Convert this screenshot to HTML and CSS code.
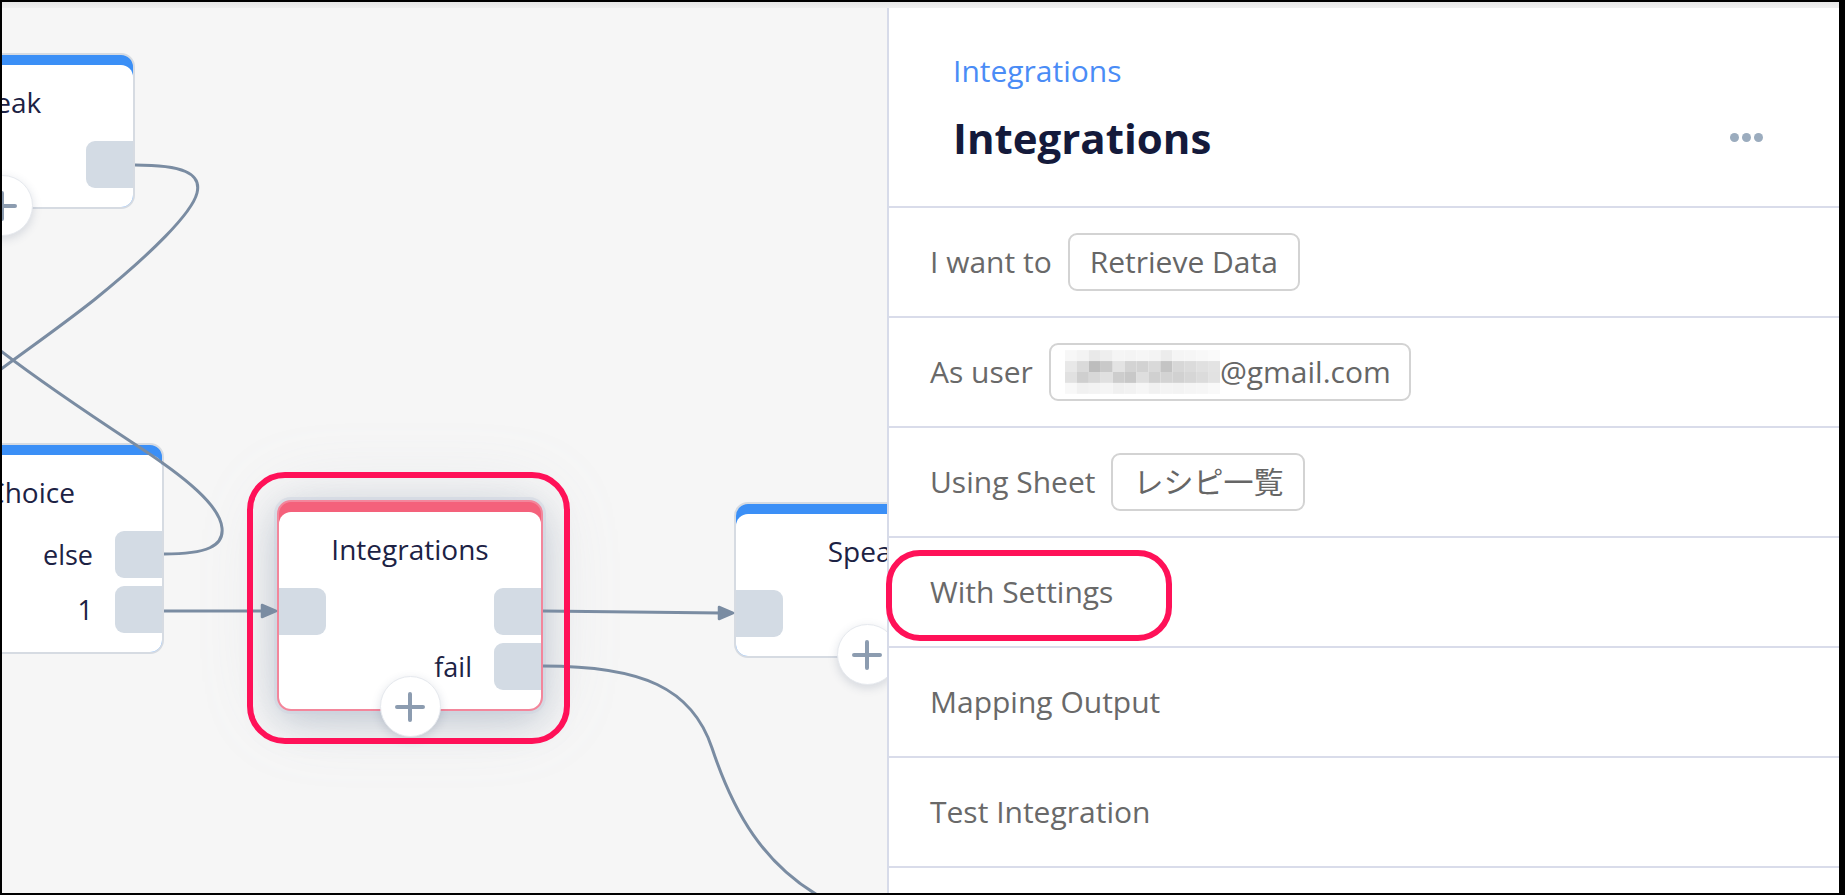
FILE: index.html
```html
<!DOCTYPE html>
<html lang="en">
<head>
<meta charset="utf-8">
<title>Integrations</title>
<link rel="stylesheet" href="styles.css">
</head>
<body>
<div class="frame">
  <div class="topbar"></div>
  <div class="main">
    <section class="canvas">
      <div class="node n-speak1">
        <div class="node-body">
          <div class="node-title">Speak</div>
          <div class="port-row"><span class="port in"></span><span class="port out"></span></div>
        </div>
        <button class="plus" type="button"><svg viewBox="0 0 30 30" width="30" height="30"><path d="M15 2V28M2 15H28"/></svg></button>
      </div>

      <div class="node n-choice">
        <div class="node-body">
          <div class="node-title">Choice</div>
          <div class="port-row"><span class="port-label">else</span><span class="port out"></span></div>
          <div class="port-row"><span class="port-label">1</span><span class="port out"></span></div>
        </div>
      </div>

      <div class="node node-selected n-integ">
        <div class="node-body">
          <div class="node-title">Integrations</div>
          <div class="port-row"><span class="port in"></span><span class="port out"></span></div>
          <div class="port-row"><span class="port-label">fail</span><span class="port out"></span></div>
        </div>
        <button class="plus" type="button"><svg viewBox="0 0 30 30" width="30" height="30"><path d="M15 2V28M2 15H28"/></svg></button>
      </div>

      <div class="node n-speak2">
        <div class="node-body">
          <div class="node-title">Speak</div>
          <div class="port-row"><span class="port in"></span><span class="port out"></span></div>
        </div>
        <button class="plus" type="button"><svg viewBox="0 0 30 30" width="30" height="30"><path d="M15 2V28M2 15H28"/></svg></button>
      </div>

      <svg class="edges" width="885" height="885" viewBox="0 0 885 885">
        <path class="edge" d="M133,157 C180,157 200,165 195,185 C190,205 150,245 92,292 C50,325 20,345 -10,368"/>
        <path class="edge" d="M162,546 C205,546 222,538 220,520 C218,498 185,470 131,435 C90,408 40,375 -5,340"/>
        <path class="edge" d="M162,603 L262,603"/>
        <polygon class="arrow" points="260,597 274,603 260,609"/>
        <path class="edge" d="M541,603 L719,605"/>
        <polygon class="arrow" points="717,599 731,605 717,611"/>
        <path class="edge" d="M541,658 C640,658 690,680 710,740 C730,800 760,860 830,895"/>
      </svg>

      <div class="mark-node"></div>
    </section>

    <aside class="panel">
      <header class="panel-head">
        <div class="crumb">Integrations</div>
        <div class="title-row">
          <h1 class="title">Integrations</h1>
          <div class="dots"><span></span><span></span><span></span></div>
        </div>
      </header>
      <ul class="rows">
        <li class="row"><span class="label">I want to</span><span class="chip">Retrieve Data</span></li>
        <li class="row"><span class="label">As user</span><span class="chip chip-user"><svg class="mosaic" width="155" height="44" viewBox="0 0 156 44">
          <rect x="0" y="0" width="12" height="11" fill="#f7f7f7"/><rect x="12" y="0" width="12" height="11" fill="#f3f3f3"/><rect x="24" y="0" width="12" height="11" fill="#e9e9e9"/><rect x="36" y="0" width="12" height="11" fill="#eeeeee"/><rect x="48" y="0" width="12" height="11" fill="#f5f5f5"/><rect x="60" y="0" width="12" height="11" fill="#f4f4f4"/><rect x="72" y="0" width="12" height="11" fill="#f6f6f6"/><rect x="84" y="0" width="12" height="11" fill="#f4f4f4"/><rect x="96" y="0" width="12" height="11" fill="#ececec"/><rect x="108" y="0" width="12" height="11" fill="#f5f5f5"/><rect x="120" y="0" width="12" height="11" fill="#f6f6f6"/><rect x="132" y="0" width="12" height="11" fill="#f8f8f8"/><rect x="144" y="0" width="12" height="11" fill="#fafafa"/>
          <rect x="0" y="11" width="12" height="11" fill="#e8e8e8"/><rect x="12" y="11" width="12" height="11" fill="#dadada"/><rect x="24" y="11" width="12" height="11" fill="#bdbdbd"/><rect x="36" y="11" width="12" height="11" fill="#c9c9c9"/><rect x="48" y="11" width="12" height="11" fill="#e3e3e3"/><rect x="60" y="11" width="12" height="11" fill="#d3d3d3"/><rect x="72" y="11" width="12" height="11" fill="#d2d2d2"/><rect x="84" y="11" width="12" height="11" fill="#d9d9d9"/><rect x="96" y="11" width="12" height="11" fill="#c4c4c4"/><rect x="108" y="11" width="12" height="11" fill="#d7d7d7"/><rect x="120" y="11" width="12" height="11" fill="#dbdbdb"/><rect x="132" y="11" width="12" height="11" fill="#e0e0e0"/><rect x="144" y="11" width="12" height="11" fill="#e3e3e3"/>
          <rect x="0" y="22" width="12" height="11" fill="#e1e1e1"/><rect x="12" y="22" width="12" height="11" fill="#cfcfcf"/><rect x="24" y="22" width="12" height="11" fill="#d8d8d8"/><rect x="36" y="22" width="12" height="11" fill="#e0e0e0"/><rect x="48" y="22" width="12" height="11" fill="#cdcdcd"/><rect x="60" y="22" width="12" height="11" fill="#c8c8c8"/><rect x="72" y="22" width="12" height="11" fill="#dedede"/><rect x="84" y="22" width="12" height="11" fill="#d0d0d0"/><rect x="96" y="22" width="12" height="11" fill="#d3d3d3"/><rect x="108" y="22" width="12" height="11" fill="#d1d1d1"/><rect x="120" y="22" width="12" height="11" fill="#d6d6d6"/><rect x="132" y="22" width="12" height="11" fill="#dbdbdb"/><rect x="144" y="22" width="12" height="11" fill="#e2e2e2"/>
          <rect x="0" y="33" width="12" height="11" fill="#f8f8f8"/><rect x="12" y="33" width="12" height="11" fill="#f1f1f1"/><rect x="24" y="33" width="12" height="11" fill="#f3f3f3"/><rect x="36" y="33" width="12" height="11" fill="#f5f5f5"/><rect x="48" y="33" width="12" height="11" fill="#f0f0f0"/><rect x="60" y="33" width="12" height="11" fill="#f2f2f2"/><rect x="72" y="33" width="12" height="11" fill="#f6f6f6"/><rect x="84" y="33" width="12" height="11" fill="#f1f1f1"/><rect x="96" y="33" width="12" height="11" fill="#f4f4f4"/><rect x="108" y="33" width="12" height="11" fill="#f3f3f3"/><rect x="120" y="33" width="12" height="11" fill="#f5f5f5"/><rect x="132" y="33" width="12" height="11" fill="#f6f6f6"/><rect x="144" y="33" width="12" height="11" fill="#f9f9f9"/>
        </svg><span>@gmail.com</span></span></li>
        <li class="row"><span class="label">Using Sheet</span><span class="chip">レシピ一覧</span></li>
        <li class="row"><span class="label">With Settings</span><span class="mark-row"></span></li>
        <li class="row"><span class="label">Mapping Output</span></li>
        <li class="row"><span class="label">Test Integration</span></li>
      </ul>
    </aside>
  </div>
</div>
</body>
</html>
```

FILE: styles.css
```css
* { box-sizing: border-box; }

html, body { margin: 0; padding: 0; }

body {
  background: #000;
  font-family: "Open Sans", "Noto Sans CJK JP", sans-serif;
  overflow: hidden;
}

.frame {
  margin: 2px 6px 2px 2px;
  height: 891px;
  display: flex;
  flex-direction: column;
  background: #f6f6f6;
  overflow: hidden;
}

.topbar {
  flex: none;
  height: 6px;
  background: linear-gradient(#e7e7e7, #f0f0f0);
}

.main {
  flex: 1;
  display: flex;
  min-height: 0;
}

/* ---------- canvas ---------- */
.canvas {
  position: relative;
  flex: none;
  width: 885px;
  overflow: hidden;
  background: #f6f6f6;
}

.node {
  position: absolute;
  width: 266px;
  border: 2px solid #d6dbe2;
  border-radius: 14px;
  background: #3b8ff6;
  padding-top: 10px;
  color: #1c2244;
}

.node-body {
  background: #fff;
  border-radius: 12px;
  padding: 18px 0 19px;
  display: flex;
  flex-direction: column;
  gap: 8px;
}

.node-title {
  font-size: 28px;
  line-height: 38px;
  text-align: center;
  margin-bottom: 12px;
}

.port-row {
  display: flex;
  align-items: center;
  height: 47px;
}

.port {
  width: 47px;
  height: 47px;
  background: #d3dbe4;
}

.port.in { border-radius: 0 9px 9px 0; }
.port.out { border-radius: 9px 0 0 9px; margin-left: auto; }

.port-label {
  margin-left: auto;
  margin-right: 22px;
  font-size: 27px;
  line-height: 36px;
}

.port-label + .port.out { margin-left: 0; }

.plus {
  position: absolute;
  left: 50%;
  bottom: -29px;
  width: 61px;
  height: 61px;
  margin-left: -30.5px;
  padding: 0;
  border-radius: 50%;
  border: 1px solid #e6e9ee;
  background: #fff;
  box-shadow: 0 3px 10px rgba(60, 80, 110, 0.18);
  display: flex;
  align-items: center;
  justify-content: center;
}

.plus path {
  stroke: #8c9cb0;
  stroke-width: 4;
  stroke-linecap: round;
  fill: none;
}

.n-speak1 { left: -133px; top: 45px; }
.n-choice { left: -104px; top: 435px; }
.n-integ  { left: 275px; top: 492px; }
.n-speak2 { left: 732px; top: 494px; }

.node-selected {
  background: #f4617b;
  border-color: #f3869b;
  box-shadow: 0 0 0 3px rgba(205, 212, 224, 0.55), 0 10px 36px rgba(100, 120, 150, 0.32), 0 0 80px rgba(150, 160, 180, 0.18);
}

.n-integ .plus { bottom: -28px; }

.edges {
  position: absolute;
  left: 0;
  top: 0;
  overflow: visible;
  pointer-events: none;
}

.edge {
  fill: none;
  stroke: #7a8ca2;
  stroke-width: 3;
}

.arrow {
  fill: #7a8ca2;
  stroke: #7a8ca2;
  stroke-width: 2.5;
  stroke-linejoin: round;
}

.mark-node {
  position: absolute;
  left: 245px;
  top: 464px;
  width: 323px;
  height: 272px;
  border: 6px solid #ff1158;
  border-radius: 38px;
}

/* ---------- panel ---------- */
.panel {
  flex: 1;
  position: relative;
  background: #fff;
  border-left: 2px solid #d7dbe9;
}

.panel-head {
  height: 200px;
  padding: 42px 76px 0 64px;
  border-bottom: 2px solid #d9dcea;
}

.crumb {
  font-size: 30px;
  line-height: 41px;
  color: #4a8cf6;
}

.title-row {
  margin-top: 19px;
  display: flex;
  align-items: center;
  justify-content: space-between;
}

.title {
  margin: 0;
  font-size: 42px;
  line-height: 56px;
  font-weight: 700;
  color: #141a3b;
}

.dots {
  display: flex;
  gap: 3px;
  margin-top: -2px;
}

.dots span {
  width: 9px;
  height: 9px;
  border-radius: 50%;
  background: #9bacbe;
}

.rows {
  list-style: none;
  margin: 0;
  padding: 0;
}

.row {
  position: relative;
  height: 110px;
  padding-left: 41px;
  display: flex;
  align-items: center;
  border-bottom: 2px solid #d9dcea;
  font-size: 30px;
  color: #696969;
}

.label { line-height: 40px; }

.chip {
  margin-left: 16px;
  height: 58px;
  padding: 0 20px;
  display: inline-flex;
  align-items: center;
  border: 2px solid #d3d3d3;
  border-radius: 9px;
  line-height: 40px;
  color: #666;
}

.chip-user { padding: 0 18px 0 14px; }

.mosaic { display: block; flex: none; }

.mark-row {
  position: absolute;
  left: -3px;
  top: 12px;
  width: 286px;
  height: 91px;
  border: 6px solid #ff1158;
  border-radius: 34px;
}
```
